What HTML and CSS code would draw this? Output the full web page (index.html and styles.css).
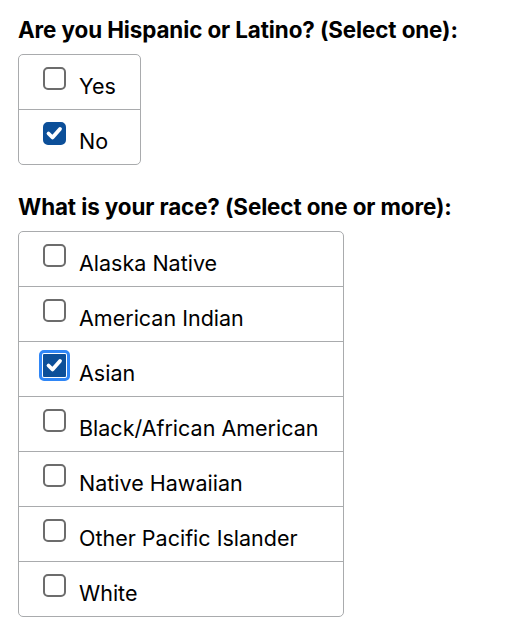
FILE: index.html
```html
<!DOCTYPE html>
<html>
<head>
<meta charset="utf-8">
<link rel="stylesheet" href="styles.css">
</head>
<body>
<div class="page">
  <fieldset class="group">
    <legend class="question">Are you Hispanic or Latino? (Select one):</legend>
    <div class="options">
      <label class="option"><span class="box"></span><span class="text">Yes</span></label>
      <label class="option"><span class="box checked"><svg viewBox="0 0 23 23"><path d="M5.5 11.5 L9.5 15.5 L17 7" /></svg></span><span class="text">No</span></label>
    </div>
  </fieldset>
  <fieldset class="group">
    <legend class="question">What is your race? (Select one or more):</legend>
    <div class="options">
      <label class="option"><span class="box"></span><span class="text">Alaska Native</span></label>
      <label class="option"><span class="box"></span><span class="text">American Indian</span></label>
      <label class="option"><span class="box checked focused"><svg viewBox="0 0 23 23"><path d="M5.5 11.5 L9.5 15.5 L17 7" /></svg></span><span class="text">Asian</span></label>
      <label class="option"><span class="box"></span><span class="text">Black/African American</span></label>
      <label class="option"><span class="box"></span><span class="text">Native Hawaiian</span></label>
      <label class="option"><span class="box"></span><span class="text">Other Pacific Islander</span></label>
      <label class="option"><span class="box"></span><span class="text">White</span></label>
    </div>
  </fieldset>
</div>
</body>
</html>
```
FILE: styles.css
```css
html, body {
  margin: 0;
  padding: 0;
  background: #ffffff;
}
.page {
  padding: 16px 0 0 18px;
  font-family: Inter, "Liberation Sans", sans-serif;
  color: #000;
}
.group {
  border: 0;
  margin: 0 0 28px 0;
  padding: 0;
  min-width: 0;
}
.question {
  padding: 0;
  font-size: 22.4px;
  font-weight: 700;
  line-height: 28px;
  margin-bottom: 10px;
  float: left;
  width: 100%;
  letter-spacing: -0.1px;
}
.options {
  clear: both;
  display: inline-flex;
  flex-direction: column;
  border: 1px solid #a9abad;
  border-radius: 5px;
}
.option {
  display: flex;
  align-items: center;
  height: 54px;
  padding: 0 24px 0 24px;
  border-top: 1px solid #a9abad;
  font-size: 21.5px;
}
.option:first-child {
  border-top: 0;
}
.box {
  flex: none;
  width: 23px;
  height: 23px;
  box-sizing: border-box;
  border: 2px solid #6c6c6c;
  border-radius: 5px;
  margin-right: 13px;
  margin-top: -7px;
  background: #fff;
  display: flex;
}
.box.checked {
  background: #0c4f99;
  border-color: #0c4f99;
}
.box svg {
  width: 23px;
  height: 23px;
  margin: -2px;
}
.box svg path {
  fill: none;
  stroke: #fff;
  stroke-width: 3.8;
  stroke-linecap: round;
  stroke-linejoin: round;
}
.box.focused {
  outline: 3px solid #2f86f6;
  outline-offset: 1px;
  border-radius: 1px;
}
.text {
  line-height: 26px;
  margin-top: 7px;
}
```
